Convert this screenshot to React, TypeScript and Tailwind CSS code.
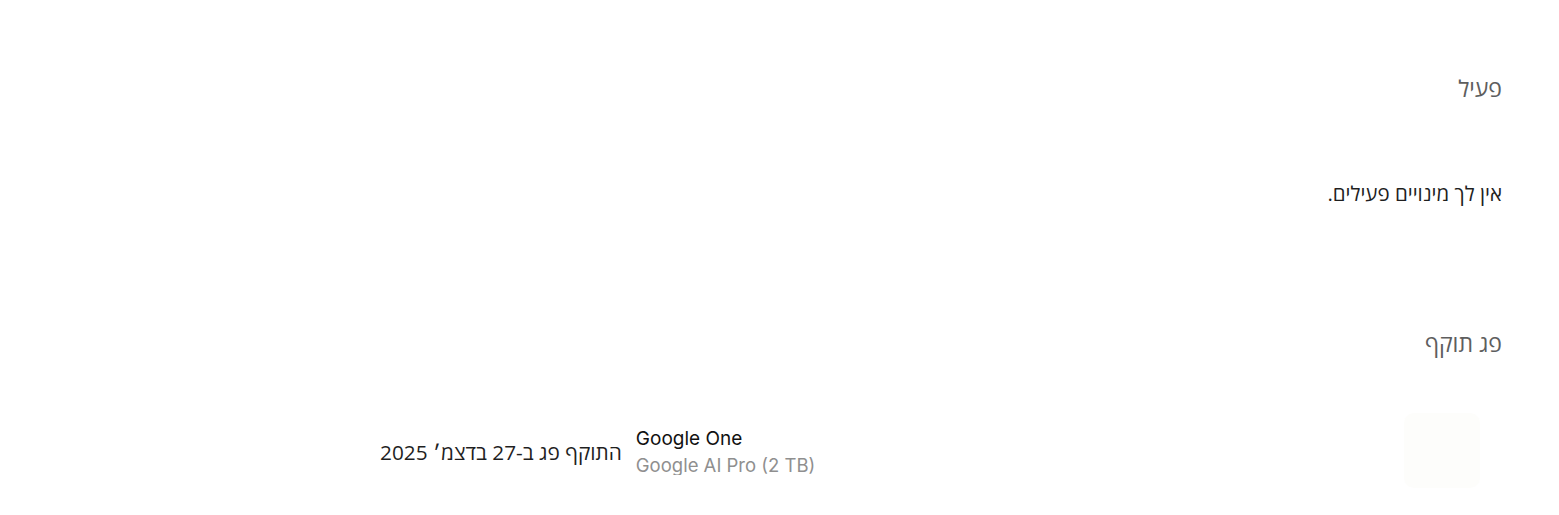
export default function App() {
  return (
    <div
      dir="rtl"
      className="min-h-screen w-full bg-white px-[57px] pt-[73px] text-[#1f1f1f]"
      style={{ fontFamily: '"Open Sans", "Noto Sans", sans-serif' }}
    >
      <h2 className="text-[23px] leading-[30px] text-[#5e5e5e]">פעיל</h2>
      <p className="mt-[75px] text-[20.5px] leading-[30px] text-[#1f1f1f]">אין לך מינויים פעילים.</p>

      <h2 className="mt-[120px] text-[23px] leading-[30px] text-[#5e5e5e]">פג תוקף</h2>

      <div className="mt-[55px] flex items-center">
        <div className="ml-[12px] mr-[22px] h-[75px] w-[76px] shrink-0 rounded-[10px] bg-[#fdfdfb]" />
        <div className="flex flex-1 items-center gap-[14px]">
          <div className="flex flex-1 flex-col items-start" dir="ltr" style={{ fontFamily: 'Inter, Roboto, sans-serif' }}>
            <span className="text-[19px] leading-[26px] text-[#111111]">Google One</span>
            <span className="h-[23px] overflow-hidden text-[18.5px] leading-[26px] text-[#8f8f8f]">Google AI Pro (2 TB)</span>
          </div>
          <div className="ml-[323px] pt-[2px] text-[20.8px] leading-[28px] text-[#1f1f1f]">התוקף פג ב-27 בדצמ׳ 2025</div>
        </div>
      </div>
    </div>
  );
}
